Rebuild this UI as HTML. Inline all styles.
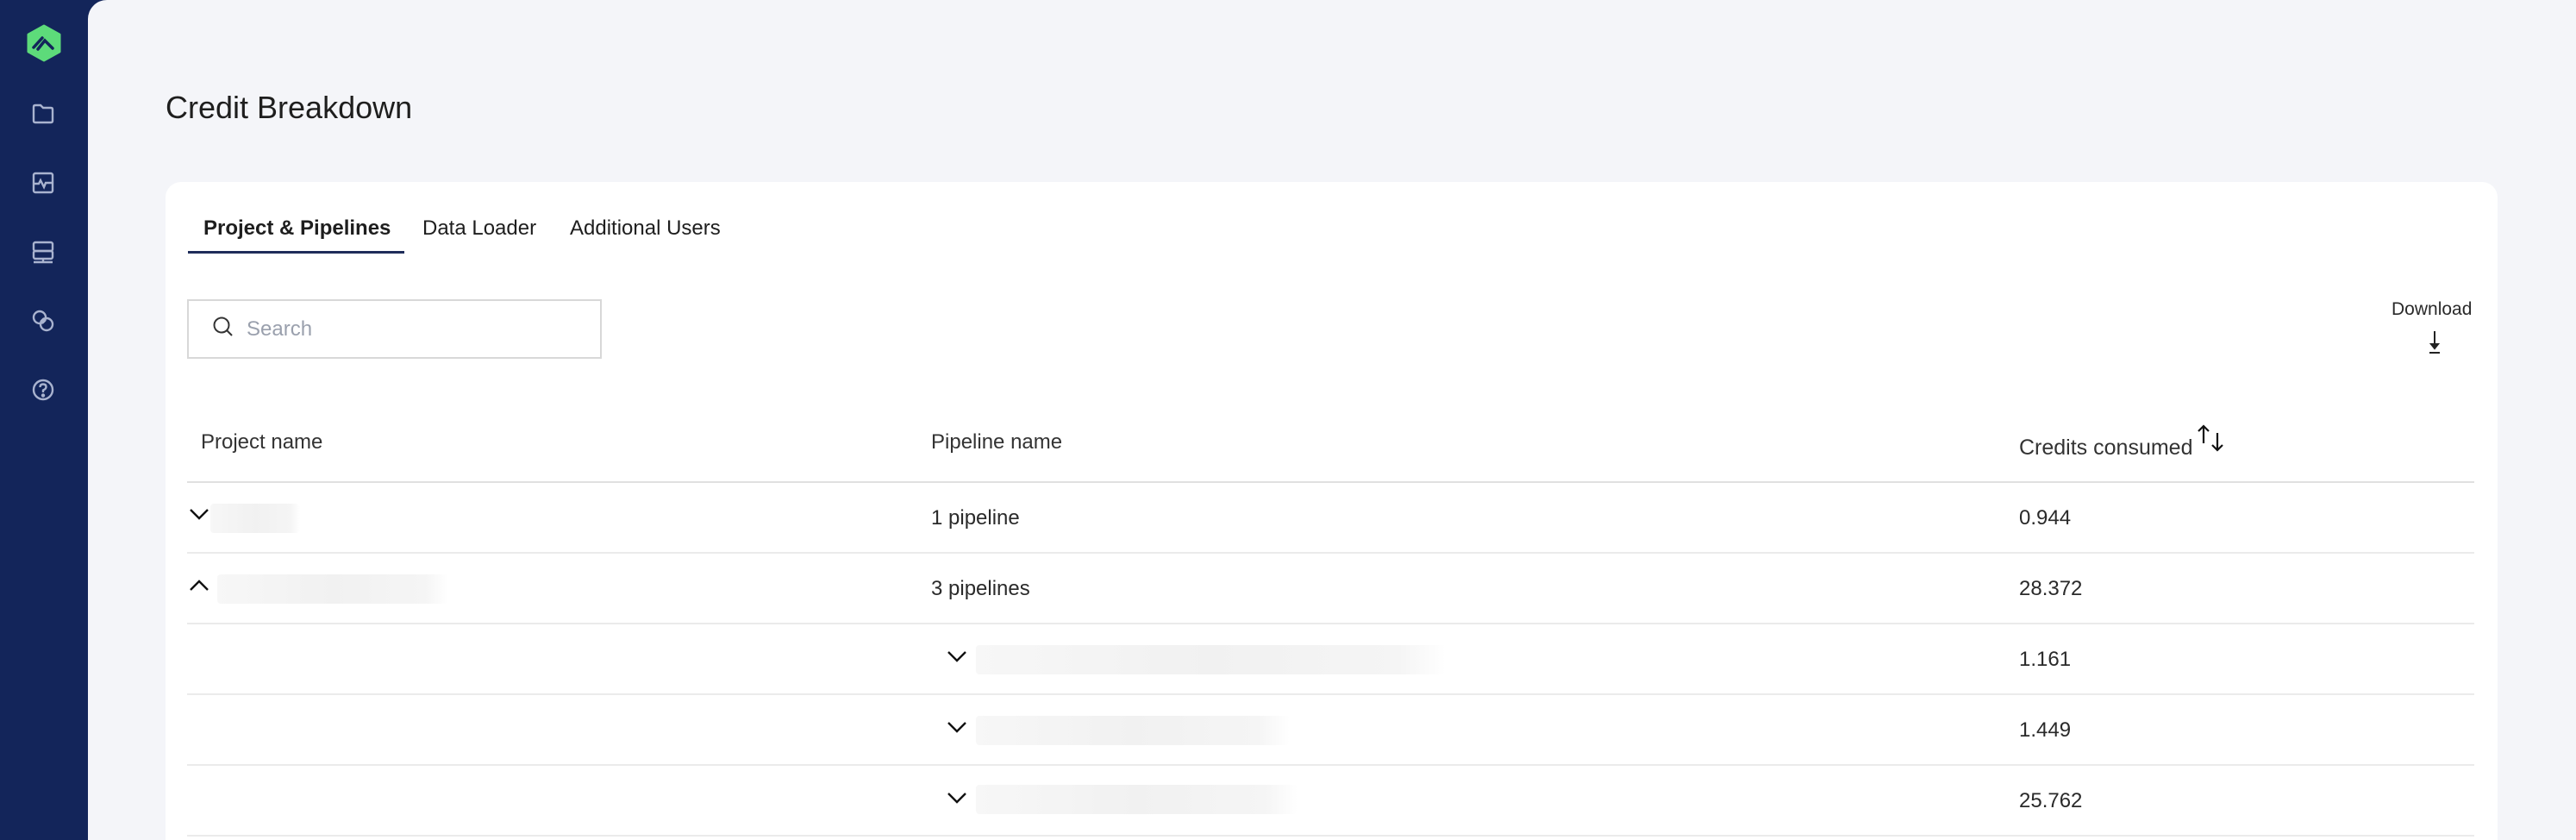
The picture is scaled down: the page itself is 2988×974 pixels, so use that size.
<!DOCTYPE html>
<html><head><meta charset="utf-8"><style>
*{margin:0;padding:0;box-sizing:border-box}
html,body{width:2988px;height:974px;overflow:hidden}
body{background:#13255a;font-family:"Liberation Sans",sans-serif;color:#222;position:relative}
.main{position:absolute;left:102px;top:0;width:2886px;height:974px;background:#f4f5f9;border-top-left-radius:22px}
.a{position:absolute;white-space:nowrap}
.card{position:absolute;left:192px;top:211px;width:2705px;height:763px;background:#fff;border-radius:18px 18px 0 0}
.ic{position:absolute;left:34px;width:32px;height:32px}
.line{position:absolute;left:217px;width:2653px;height:2px;background:#ebebeb}
.t{font-size:24px;color:#2a2a2a}
.blur{position:absolute;height:34px;background:linear-gradient(90deg,#f7f7f7,#f1f1f1 50%,#f5f5f5 90%,#fff);border-radius:4px}
</style></head><body>
<svg class="a" style="left:30px;top:28px" width="42" height="44" viewBox="0 0 42 44"><path d="M21 2 L39 12 V32 L21 42 L3 32 V12 Z" fill="#5ddb7a" stroke="#5ddb7a" stroke-width="3" stroke-linejoin="round"/><path d="M9 27 L19 16 M14 29 L22 19 L31 28" stroke="#13255a" stroke-width="3.5" fill="none" stroke-linecap="round"/></svg>
<svg class="ic" style="top:116px" viewBox="0 0 32 32" fill="none" stroke="#a9b3cf" stroke-width="2.4"><path d="M5 8 Q5 6 7 6 H13 L16 9 H25 Q27 9 27 11 V24 Q27 26 25 26 H7 Q5 26 5 24 Z"/></svg>
<svg class="ic" style="top:196px" viewBox="0 0 32 32" fill="none" stroke="#a9b3cf" stroke-width="2.4"><rect x="5" y="5" width="22" height="22" rx="2"/><path d="M5 17 H11 L13 13 L17 21 L19 16 H27"/></svg>
<svg class="ic" style="top:276px" viewBox="0 0 32 32" fill="none" stroke="#a9b3cf" stroke-width="2.4"><rect x="5" y="5" width="22" height="10" rx="2"/><rect x="5" y="15" width="22" height="9" rx="2"/><path d="M16 24 V28 M5 28 H27"/></svg>
<svg class="ic" style="top:356px" viewBox="0 0 32 32" fill="none" stroke="#a9b3cf" stroke-width="2.4"><circle cx="12" cy="12" r="7"/><circle cx="20" cy="20" r="7"/><path d="M14 18 L18 14" stroke-width="5"/></svg>
<svg class="ic" style="top:436px" viewBox="0 0 32 32" fill="none" stroke="#a9b3cf" stroke-width="2.4"><circle cx="16" cy="16" r="11"/><path d="M12.5 13 Q12.5 9.5 16 9.5 Q19.5 9.5 19.5 12.5 Q19.5 15 16 16.5 V19"/><circle cx="16" cy="22.5" r="1" fill="#a9b3cf"/></svg>
<div class="main"></div>
<div class="a" style="left:192px;top:104px;font-size:36px;color:#1e1e1e">Credit Breakdown</div>
<div class="card"></div>
<div class="a" style="left:236px;top:251px;font-size:24px;font-weight:bold;color:#1e1e1e">Project &amp; Pipelines</div>
<div class="a" style="left:490px;top:251px;font-size:24px;color:#1e1e1e">Data Loader</div>
<div class="a" style="left:661px;top:251px;font-size:24px;color:#1e1e1e">Additional Users</div>
<div class="a" style="left:218px;top:291px;width:251px;height:3px;background:#1f2d5a"></div>
<div class="a" style="left:217px;top:347px;width:481px;height:69px;border:2px solid #d8d8d8"></div>
<svg class="a" style="left:246px;top:366px" width="28" height="28" viewBox="0 0 28 28" fill="none" stroke="#333" stroke-width="2"><circle cx="11" cy="11" r="8.5"/><path d="M17 17 L23 23"/></svg>
<div class="a" style="left:286px;top:368px;font-size:24px;color:#9aa0ad">Search</div>
<div class="a" style="left:2774px;top:347px;font-size:21px;color:#2a2a2a">Download</div>
<svg class="a" style="left:2814px;top:382px" width="20" height="30" viewBox="0 0 20 30" fill="none" stroke="#222" stroke-width="2"><path d="M10 2 V20"/><path d="M6 17 L10 22 L14 17 Z" fill="#222"/><path d="M4 27 H16"/></svg>
<div class="a t" style="left:233px;top:499px;color:#333">Project name</div>
<div class="a t" style="left:1080px;top:499px;color:#333">Pipeline name</div>
<div class="a t" style="left:2342px;top:505px;color:#333;font-size:25px">Credits consumed</div>
<svg class="a" style="left:2546px;top:490px" width="40" height="40" viewBox="0 0 40 40" fill="none" stroke="#111" stroke-width="2.2"><path d="M10 24 V4 M4 10 L10 4 L16 10"/><path d="M26 12 V32 M20 26 L26 32 L32 26"/></svg>
<div class="line" style="top:558px;background:#e0e0e0"></div>
<div class="line" style="top:640px"></div>
<div class="line" style="top:722px"></div>
<div class="line" style="top:804px"></div>
<div class="line" style="top:886px"></div>
<div class="line" style="top:968px"></div>
<svg class="a" style="left:219px;top:588px" width="24" height="16" viewBox="0 0 24 16" fill="none" stroke="#111" stroke-width="2.4"><path d="M2 3 L12 13 L22 3"/></svg>
<svg class="a" style="left:219px;top:671px" width="24" height="16" viewBox="0 0 24 16" fill="none" stroke="#111" stroke-width="2.4"><path d="M2 13 L12 3 L22 13"/></svg>
<svg class="a" style="left:1098px;top:753px" width="24" height="16" viewBox="0 0 24 16" fill="none" stroke="#111" stroke-width="2.4"><path d="M2 3 L12 13 L22 3"/></svg>
<svg class="a" style="left:1098px;top:835px" width="24" height="16" viewBox="0 0 24 16" fill="none" stroke="#111" stroke-width="2.4"><path d="M2 3 L12 13 L22 3"/></svg>
<svg class="a" style="left:1098px;top:917px" width="24" height="16" viewBox="0 0 24 16" fill="none" stroke="#111" stroke-width="2.4"><path d="M2 3 L12 13 L22 3"/></svg>
<div class="blur" style="left:244px;top:584px;width:104px"></div>
<div class="blur" style="left:252px;top:666px;width:268px"></div>
<div class="blur" style="left:1132px;top:748px;width:545px"></div>
<div class="blur" style="left:1132px;top:830px;width:364px"></div>
<div class="blur" style="left:1132px;top:910px;width:373px"></div>
<div class="a t" style="left:1080px;top:587px">1 pipeline</div>
<div class="a t" style="left:1080px;top:669px">3 pipelines</div>
<div class="a t" style="left:2342px;top:587px">0.944</div>
<div class="a t" style="left:2342px;top:669px">28.372</div>
<div class="a t" style="left:2342px;top:751px">1.161</div>
<div class="a t" style="left:2342px;top:833px">1.449</div>
<div class="a t" style="left:2342px;top:915px">25.762</div>
</body></html>
